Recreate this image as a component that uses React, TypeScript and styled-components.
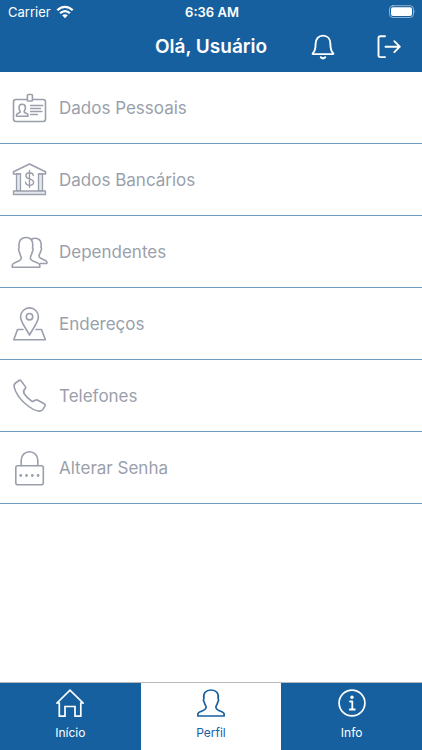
import React from "react";
import styled, { createGlobalStyle } from "styled-components";

const BLUE = "#17609f";
const GRAY = "#9a9fab";

const GlobalStyle = createGlobalStyle`
  * { box-sizing: border-box; }
  html, body, #root { height: 100%; }
  body {
    margin: 0;
    background: #fff;
    font-family: Inter, "Liberation Sans", sans-serif;
  }
`;

const Screen = styled.div`
  display: flex;
  flex-direction: column;
  min-height: 100%;
`;

const Header = styled.header`
  background: ${BLUE};
  color: #fff;
`;

const StatusBar = styled.div`
  display: grid;
  grid-template-columns: 1fr auto 1fr;
  align-items: center;
  height: 24px;
  padding: 0 6px 0 8px;
  font-size: 13px;
  line-height: 24px;
`;

const Carrier = styled.span`
  display: flex;
  align-items: center;
  gap: 5px;
`;

const Time = styled.time`
  font-weight: 600;
`;

const Battery = styled.span`
  display: flex;
  justify-content: flex-end;
`;

const TitleBar = styled.div`
  display: grid;
  grid-template-columns: 1fr auto 1fr;
  align-items: center;
  height: 48px;
  padding: 0 20px 2px;
`;

const Title = styled.h1`
  grid-column: 2;
  margin: 0;
  font-size: 19px;
  font-weight: 600;
  line-height: 24px;
`;

const Actions = styled.div`
  display: flex;
  justify-content: flex-end;
  gap: 37px;
`;

const IconButton = styled.button`
  display: flex;
  padding: 0;
  border: 0;
  background: none;
  color: inherit;
  cursor: pointer;
`;

const Menu = styled.main`
  flex: 1;
`;

const MenuRow = styled.a`
  display: flex;
  align-items: center;
  gap: 9px;
  padding: 16px 10px 15px;
  border-bottom: 1px solid #6d9abf;
  color: ${GRAY};
  font-size: 17px;
  line-height: 24px;
  text-decoration: none;
`;

const Tabs = styled.nav`
  display: grid;
  grid-template-columns: repeat(3, 1fr);
  border-top: 1px solid #b5b9be;
`;

const Tab = styled.a<{ $active?: boolean }>`
  display: flex;
  flex-direction: column;
  align-items: center;
  gap: 8px;
  padding: 6px 0 9px;
  background: ${(p) => (p.$active ? "#fff" : BLUE)};
  color: ${(p) => (p.$active ? BLUE : "#fff")};
  font-size: 12px;
  line-height: 16px;
  text-decoration: none;
`;

const Icon = styled.svg`
  display: block;
  flex: none;
  fill: none;
  stroke: currentColor;
  stroke-linecap: round;
  stroke-linejoin: round;
`;

const MenuIcon = ({ children }: { children: React.ReactNode }) => (
  <Icon width="40" height="40" viewBox="0 0 40 40" strokeWidth="1.6" aria-hidden="true">
    {children}
  </Icon>
);

const TabIcon = ({ children }: { children: React.ReactNode }) => (
  <Icon width="28" height="28" viewBox="0 0 28 28" strokeWidth="1.7" aria-hidden="true">
    {children}
  </Icon>
);

const menu = [
  {
    label: "Dados Pessoais",
    icon: (
      <>
        <path d="M17 11.5H6A2.5 2.5 0 0 0 3.5 14v17A2.500 2.500 0 0 0 6 33.500h27a2.500 2.500 0 0 0 2.500-2.500V14a2.500 2.500 0 0 0-2.500-2.500H23" />
        <rect x="17.400" y="6.500" width="5" height="6.500" rx="0.800" />
        <path d="M6.500 28.200v-1.300c0-1.500 3.800-1.600 3.800-3.200 0-.7-1.300-1.600-1.300-4 0-2.200 1.200-3.400 3.200-3.400s3.200 1.200 3.200 3.400c0 2.400-1.300 3.300-1.300 4 0 1.600 3.900 1.700 3.900 3.200v1.300z" />
        <path d="M20.500 17.500h12.300M20.500 20.500h10M20.500 23.500h11.500M20.500 26.500h7" strokeWidth="1.300" />
      </>
    ),
  },
  {
    label: "Dados Bancários",
    icon: (
      <>
        <path d="M10.500 14h-7v-2.300L19.500 4l16 7.700V14h-7" />
        <path d="M6.500 14v17h4V14zM28.500 14v17h4V14z" fill="#e3e8ef" strokeWidth="1.300" />
        <path d="M3.500 31h32v3.500h-32z" fill="#e3e8ef" strokeWidth="1.300" />
        <path d="M19.500 10.500v17M23.300 15.500c-.3-1.700-1.700-2.700-3.700-2.700-2.200 0-3.700 1.100-3.700 2.900 0 4.200 7.700 2.300 7.700 6.600 0 1.900-1.600 3-3.900 3-2.300 0-3.900-1.100-4.100-3.100" strokeWidth="1.400" />
      </>
    ),
  },
  {
    label: "Dependentes",
    icon: (
      <>
        <path d="M2.300 35.300v-2.100c0-3.200 9-3.200 9-7.300 0-1.500-1.500-3-1.900-6.100-.9-.6-1.100-3.200-.3-3.700-.9-6.800 1.500-10.600 6.900-10.600s7.600 3.800 6.500 10.600c.9.500.7 3.100-.3 3.700-.4 3.100-1.900 4.600-1.900 6.100 0 4.100 9.500 4.100 9.500 7.300v2.100z" />
        <path d="M21.300 7.500c1.100-.8 2.300-1.200 3.700-1.200 4.900 0 6.900 3.400 6 9.300.8.500.6 2.800-.3 3.300-.4 2.800-1.700 3.700-1.700 5.100 0 3.500 7.800 3.300 7.800 6v1.500h-6.500" />
      </>
    ),
  },
  {
    label: "Endereços",
    icon: (
      <>
        <path d="M19.500 31C15.500 23.500 10.600 18.300 10.600 12.800a8.900 8.900 0 0 1 17.800 0C28.400 18.300 23.500 23.500 19.500 31z" />
        <circle cx="19.500" cy="12.700" r="3.200" />
        <path d="M13 25.500H7.500L3.800 35.800h31.600l-3.900-10.300H26" />
      </>
    ),
  },
  {
    label: "Telefones",
    icon: (
      <path d="M5.500 7 9 4.500c.8-.5 1.600-.4 2.200.4l4.200 5.700c.5.7.4 1.400-.2 2-1.900 1.900-2.300 3.200-1 5.200 2 3 4.500 5.400 7.300 7.200 1.200.7 2 .5 3-.3 1.200-1 2.200-1.200 3.400-.5l6.200 3.500c1.200.7 1.400 1.600.7 2.700l-1.900 3c-.7 1.200-1.800 1.700-3.200 1.700-4.300 0-9.400-3-14.700-7.600C10 23 5.500 17 4.200 11.200c-.4-1.800 0-3.200 1.300-4.200z" />
    ),
  },
  {
    label: "Alterar Senha",
    icon: (
      <>
        <rect x="5.800" y="17.800" width="27.500" height="19" rx="2" />
        <path d="M11.200 17.500V12a8.300 8.300 0 0 1 16.600 0v5.500" />
        <path d="M10.700 27.500h.01M16.500 27.500h.01M22.300 27.500h.01M28.100 27.500h.01" strokeWidth="2.800" />
      </>
    ),
  },
];

const tabs = [
  {
    label: "Início",
    active: false,
    icon: (
      <path d="M1 14 14 1.200 27 14h-2.200v13.200H19v-9.700H9v9.700H3.300V14z" strokeLinejoin="miter" />
    ),
  },
  {
    label: "Perfil",
    active: true,
    icon: (
      <path d="M.9 27v-2c0-2.700 8.200-2.800 8.200-6.800 0-1.500-1.400-2.500-1.900-5.300-.8-.5-1-2.600-.3-3.200C6 4 8.700 1 14 1s8 3 7.100 8.700c.7.600.5 2.700-.3 3.200-.5 2.800-1.900 3.800-1.900 5.300 0 4 8.200 4.100 8.200 6.800v2z" />
    ),
  },
  {
    label: "Info",
    active: false,
    icon: (
      <>
        <circle cx="14" cy="14" r="12.900" />
        <path d="M12 12.500h2.300V20M11.800 20.500h5" strokeWidth="1.800" />
        <circle cx="14" cy="8.300" r="1.700" fill="currentColor" stroke="none" />
      </>
    ),
  },
];

export default function App() {
  return (
    <>
      <GlobalStyle />
      <Screen>
        <Header>
          <StatusBar>
            <Carrier>
              Carrier
              <Icon width="18" height="14" viewBox="0 0 18 14" aria-hidden="true">
                <path
                  d="M1.300 5.300c4.400-4.600 11-4.600 15.400 0M4.100 8.300c2.900-2.900 6.900-2.900 9.800 0"
                  strokeWidth="2.300"
                  strokeLinecap="butt"
                />
                <path d="M9 13.200 6.200 10.300c1.700-1.400 3.900-1.400 5.600 0z" fill="currentColor" stroke="none" />
              </Icon>
            </Carrier>
            <Time>6:36 AM</Time>
            <Battery>
              <Icon width="28" height="14" viewBox="0 0 28 14" aria-hidden="true">
                <rect x="1.500" y="0.700" width="24" height="11.800" rx="3.500" strokeOpacity="0.500" />
                <rect x="3" y="2.200" width="21" height="8.800" rx="2" fill="currentColor" stroke="none" />
                <path d="M26.500 5q1.500 1.600 0 3.200z" fill="currentColor" stroke="none" opacity="0.500" />
              </Icon>
            </Battery>
          </StatusBar>
          <TitleBar>
            <Title>Olá, Usuário</Title>
            <Actions>
              <IconButton type="button" aria-label="Notificações">
                <Icon width="28" height="28" viewBox="0 0 28 28" strokeWidth="1.900" aria-hidden="true">
                  <path d="M3.800 20.300c2.400-2.200 2.800-4.200 2.800-9.300C6.600 6 9.600 2.600 14 2.600s7.400 3.400 7.400 8.400c0 5.100.4 7.100 2.800 9.300.4.400.2.800-.3.800H4.100c-.5 0-.7-.4-.3-.8z" />
                  <path d="M11.800 24.300q2.200 2.200 4.400 0" strokeWidth="2" />
                </Icon>
              </IconButton>
              <IconButton type="button" aria-label="Sair">
                <Icon width="28" height="28" viewBox="0 0 28 28" strokeWidth="1.900" aria-hidden="true">
                  <path d="M11 3.300H6.300a1.800 1.800 0 0 0-1.800 1.800v17.200a1.800 1.800 0 0 0 1.800 1.800H11M11.500 13.700h14.300M20.300 8.200l5.500 5.500-5.500 5.500" />
                </Icon>
              </IconButton>
            </Actions>
          </TitleBar>
        </Header>
        <Menu>
          {menu.map(({ label, icon }) => (
            <MenuRow href="#" key={label}>
              <MenuIcon>{icon}</MenuIcon>
              {label}
            </MenuRow>
          ))}
        </Menu>
        <Tabs>
          {tabs.map(({ label, active, icon }) => (
            <Tab href="#" key={label} $active={active} aria-current={active ? "page" : undefined}>
              <TabIcon>{icon}</TabIcon>
              {label}
            </Tab>
          ))}
        </Tabs>
      </Screen>
    </>
  );
}
